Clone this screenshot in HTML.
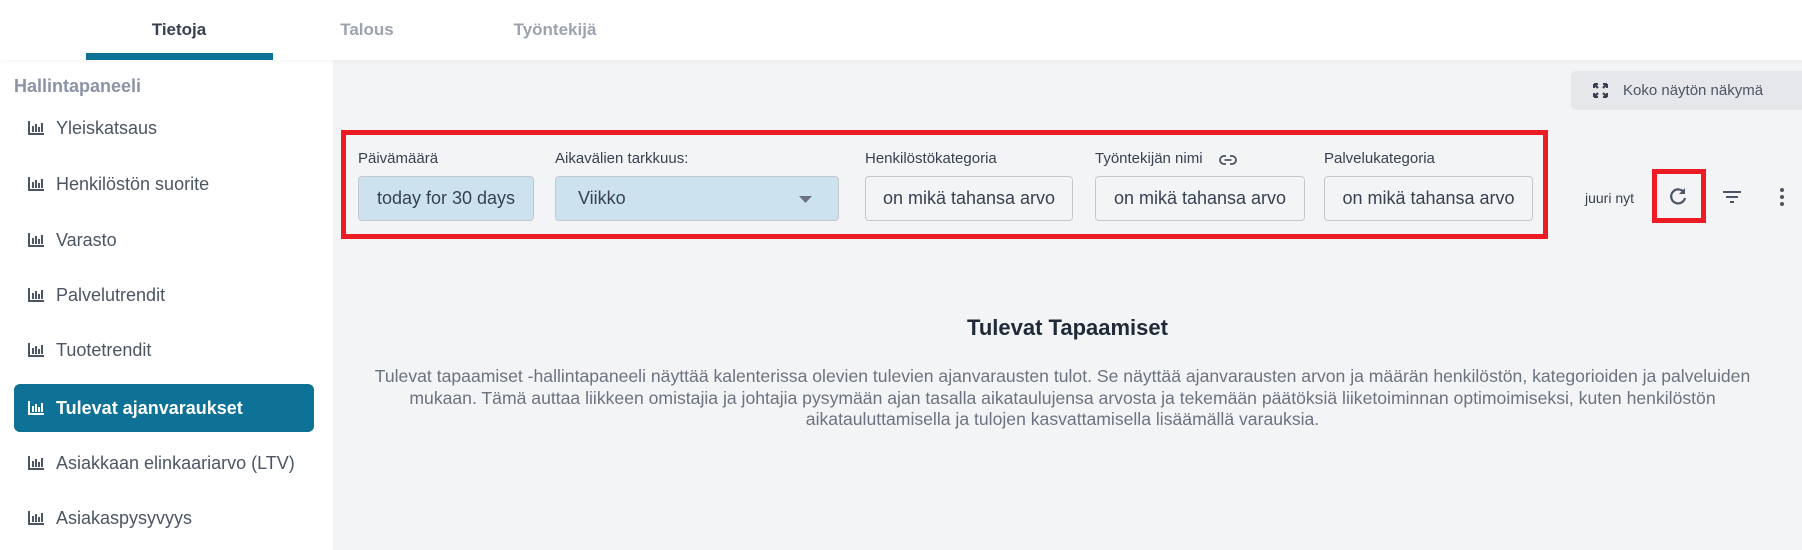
<!DOCTYPE html>
<html><head><meta charset="utf-8"><style>
*{margin:0;padding:0;box-sizing:border-box}
body{width:1802px;height:550px;overflow:hidden;background:#f3f4f6;font-family:"Liberation Sans",Arial,sans-serif;position:relative}
.hdr{position:absolute;left:0;top:0;width:1802px;height:60px;background:#fff;box-shadow:0 2px 4px rgba(0,0,0,.04);z-index:2}
.tab{position:absolute;top:20px;font-weight:bold;font-size:17px;color:#9ca3af;transform:translateX(-50%)}
.ul{position:absolute;left:86px;top:53px;width:187px;height:7px;background:#0e7196}
.side{position:absolute;left:0;top:60px;width:333px;height:490px;background:#fff}
.sh{position:absolute;left:14px;top:16px;font-weight:bold;font-size:18px;color:#8a94a6}
.it{position:absolute;left:14px;width:300px;height:48px;border-radius:6px;font-size:18px;color:#4b5563;line-height:48px;padding-left:42px}
.it svg{position:absolute;left:14px;top:17px}
.it.act{background:#0e7196;color:#fff;font-weight:bold}
.kb{position:absolute;left:1571px;top:71px;width:231px;height:39px;background:#e5e7eb;border-radius:5px 0 0 5px;font-size:15px;color:#4b5563;line-height:39px;padding-left:52px}
.red{position:absolute;left:341px;top:130px;width:1207px;height:109px;border:5px solid #ed1c24}
.lb{position:absolute;top:150px;font-size:15px;color:#374151}
.f{position:absolute;top:176px;height:45px;border:1px solid #c4c8cd;border-radius:4px;background:#f3f4f6;font-size:18px;color:#374151;line-height:43px;text-align:center}
.f.b{background:#cce3ef}
h2{position:absolute;left:333px;width:1469px;top:315px;text-align:center;font-size:22px;color:#1f2937}
p{position:absolute;left:350px;width:1425px;top:366px;text-align:center;font-size:17.6px;line-height:21.5px;color:#6b7280}
</style></head><body>
<div class="hdr">
<div class="tab" style="left:179px;color:#374151">Tietoja</div>
<div class="tab" style="left:367px">Talous</div>
<div class="tab" style="left:555px">Työntekijä</div>
<div class="ul"></div>
</div>
<div class="side">
<div class="sh">Hallintapaneeli</div>
<div class="it" style="top:44px"><svg width="16" height="14" viewBox="0 0 16 14"><path d="M1 0v13h15" stroke="#4b5563" stroke-width="2" fill="none"/><path d="M5 5v6M8 3v8M11 6v5M14 2v9" stroke="#4b5563" stroke-width="2"/></svg>Yleiskatsaus</div>
<div class="it" style="top:100px"><svg width="16" height="14" viewBox="0 0 16 14"><path d="M1 0v13h15" stroke="#4b5563" stroke-width="2" fill="none"/><path d="M5 5v6M8 3v8M11 6v5M14 2v9" stroke="#4b5563" stroke-width="2"/></svg>Henkilöstön suorite</div>
<div class="it" style="top:156px"><svg width="16" height="14" viewBox="0 0 16 14"><path d="M1 0v13h15" stroke="#4b5563" stroke-width="2" fill="none"/><path d="M5 5v6M8 3v8M11 6v5M14 2v9" stroke="#4b5563" stroke-width="2"/></svg>Varasto</div>
<div class="it" style="top:211px"><svg width="16" height="14" viewBox="0 0 16 14"><path d="M1 0v13h15" stroke="#4b5563" stroke-width="2" fill="none"/><path d="M5 5v6M8 3v8M11 6v5M14 2v9" stroke="#4b5563" stroke-width="2"/></svg>Palvelutrendit</div>
<div class="it" style="top:266px"><svg width="16" height="14" viewBox="0 0 16 14"><path d="M1 0v13h15" stroke="#4b5563" stroke-width="2" fill="none"/><path d="M5 5v6M8 3v8M11 6v5M14 2v9" stroke="#4b5563" stroke-width="2"/></svg>Tuotetrendit</div>
<div class="it act" style="top:324px"><svg width="16" height="14" viewBox="0 0 16 14"><path d="M1 0v13h15" stroke="#fff" stroke-width="2" fill="none"/><path d="M5 5v6M8 3v8M11 6v5M14 2v9" stroke="#fff" stroke-width="2"/></svg>Tulevat ajanvaraukset</div>
<div class="it" style="top:379px"><svg width="16" height="14" viewBox="0 0 16 14"><path d="M1 0v13h15" stroke="#4b5563" stroke-width="2" fill="none"/><path d="M5 5v6M8 3v8M11 6v5M14 2v9" stroke="#4b5563" stroke-width="2"/></svg>Asiakkaan elinkaariarvo (LTV)</div>
<div class="it" style="top:434px"><svg width="16" height="14" viewBox="0 0 16 14"><path d="M1 0v13h15" stroke="#4b5563" stroke-width="2" fill="none"/><path d="M5 5v6M8 3v8M11 6v5M14 2v9" stroke="#4b5563" stroke-width="2"/></svg>Asiakaspysyvyys</div>
</div>
<div class="kb"><svg style="position:absolute;left:22px;top:12px" width="15" height="15" viewBox="0 0 15 15"><path d="M1 1l4 4M14 1l-4 4M1 14l4-4M14 14l-4-4M1 1h4M1 1v4M14 1h-4M14 1v4M1 14h4M1 14v-4M14 14h-4M14 14v-4" stroke="#374151" stroke-width="2.2"/></svg>Koko näytön näkymä</div>
<div class="red"></div>
<div class="lb" style="left:358px">Päivämäärä</div>
<div class="lb" style="left:555px">Aikavälien tarkkuus:</div>
<div class="lb" style="left:865px">Henkilöstökategoria</div>
<div class="lb" style="left:1095px">Työntekijän nimi <svg style="margin-left:12px;vertical-align:-2px" width="18" height="10" viewBox="0 0 18 10"><path d="M7 1H5a4 4 0 000 8h2M11 1h2a4 4 0 010 8h-2M5.5 5h7" stroke="#4b5563" stroke-width="1.8" fill="none"/></svg></div>
<div class="lb" style="left:1324px">Palvelukategoria</div>
<div class="f b" style="left:358px;width:176px">today for 30 days</div>
<div class="f b" style="left:555px;width:284px;text-align:left;padding-left:22px">Viikko<svg style="position:absolute;right:26px;top:19px" width="13" height="7"><path d="M0 0h13L6.5 7z" fill="#6b7280"/></svg></div>
<div class="f" style="left:865px;width:208px">on mikä tahansa arvo</div>
<div class="f" style="left:1095px;width:210px">on mikä tahansa arvo</div>
<div class="f" style="left:1324px;width:209px">on mikä tahansa arvo</div>
<div style="position:absolute;left:1585px;top:190px;font-size:14px;color:#374151">juuri nyt</div>
<div style="position:absolute;left:1652px;top:169px;width:54px;height:54px;border:5px solid #ed1c24"></div>
<svg style="position:absolute;left:1668px;top:186px" width="20" height="20" viewBox="0 0 20 20"><path d="M16 6.5A7 7 0 1017 12" stroke="#4b5563" stroke-width="2.2" fill="none"/><path d="M17 2v6h-6z" fill="#4b5563"/></svg>
<svg style="position:absolute;left:1723px;top:191px" width="18" height="12"><path d="M0 1h18M3 6h12M7 11h4" stroke="#4b5563" stroke-width="2"/></svg>
<svg style="position:absolute;left:1779px;top:188px" width="6" height="18"><circle cx="3" cy="2" r="2" fill="#4b5563"/><circle cx="3" cy="9" r="2" fill="#4b5563"/><circle cx="3" cy="16" r="2" fill="#4b5563"/></svg>
<h2>Tulevat Tapaamiset</h2>
<p>Tulevat tapaamiset -hallintapaneeli näyttää kalenterissa olevien tulevien ajanvarausten tulot. Se näyttää ajanvarausten arvon ja määrän henkilöstön, kategorioiden ja palveluiden<br>mukaan. Tämä auttaa liikkeen omistajia ja johtajia pysymään ajan tasalla aikataulujensa arvosta ja tekemään päätöksiä liiketoiminnan optimoimiseksi, kuten henkilöstön<br>aikatauluttamisella ja tulojen kasvattamisella lisäämällä varauksia.</p>
</body></html>
